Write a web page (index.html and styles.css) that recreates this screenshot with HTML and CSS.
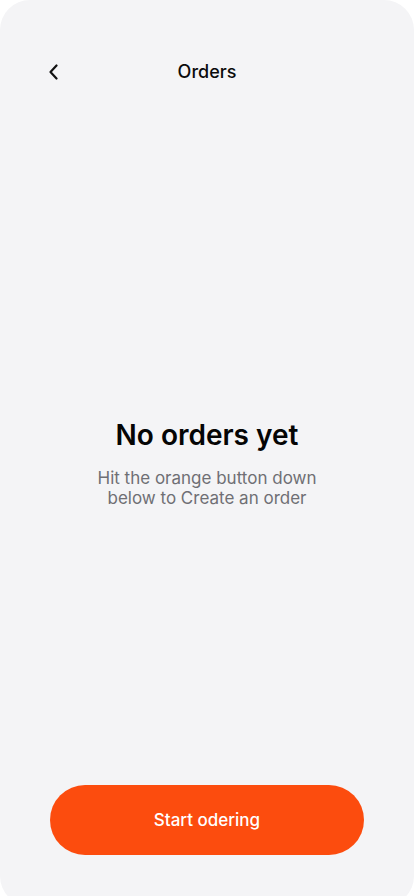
FILE: index.html
```html
<!DOCTYPE html>
<html lang="en">
<head>
<meta charset="utf-8">
<title>Orders</title>
<link rel="stylesheet" href="styles.css">
</head>
<body>
<div class="screen">
  <header class="topbar">
    <button class="back" aria-label="Back">
      <svg width="10" height="16" viewBox="0 0 10 16" fill="none"><path d="M7.5 1.5 L1.5 8 L7.5 14.5" stroke="#111" stroke-width="2.2" stroke-linecap="round" stroke-linejoin="round"/></svg>
    </button>
    <h1 class="title">Orders</h1>
  </header>
  <main class="empty">
    <h2 class="empty-title">No orders yet</h2>
    <p class="empty-text">Hit the orange button down<br>below to Create an order</p>
  </main>
  <footer class="actions">
    <button class="primary">Start odering</button>
  </footer>
</div>
</body>
</html>
```
FILE: styles.css
```css
* { box-sizing: border-box; }
html, body { margin: 0; padding: 0; background: #ffffff; overflow: hidden; }
body { font-family: Inter, "Noto Sans", sans-serif; color: #111; }
.screen {
  width: 414px;
  height: 906px;
  background: #f4f4f6;
  border-radius: 30px;
  display: flex;
  flex-direction: column;
}
.topbar {
  position: relative;
  height: 88px;
  padding-top: 56px;
  display: flex;
  justify-content: center;
}
.back {
  position: absolute;
  left: 44px;
  top: 60px;
  width: 20px;
  height: 24px;
  border: 0;
  padding: 0;
  background: none;
  display: flex;
  align-items: center;
  justify-content: center;
}
.title {
  margin: 0;
  height: 32px;
  line-height: 32px;
  font-size: 18px;
  font-weight: 500;
  color: #0b0b0b;
}
.empty {
  flex: 1;
  padding-top: 330px;
  text-align: center;
}
.empty-title {
  margin: 0;
  font-size: 28px;
  line-height: 34px;
  font-weight: 600;
  color: #050505;
}
.empty-text {
  margin: 16px 0 0;
  font-size: 17px;
  line-height: 20px;
  color: #6f6f74;
}
.actions {
  display: flex;
  justify-content: center;
  padding-bottom: 51px;
}
.primary {
  width: 314px;
  height: 70px;
  border: 0;
  border-radius: 35px;
  background: #fc4c0e;
  color: #fff;
  font-family: Inter, "Noto Sans", sans-serif;
  font-size: 17px;
  font-weight: 500;
}
```
